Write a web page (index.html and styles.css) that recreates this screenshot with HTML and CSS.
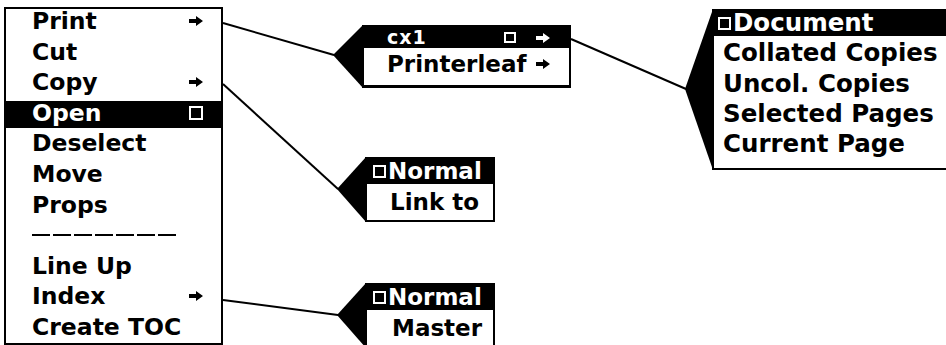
FILE: index.html
```html
<!DOCTYPE html>
<html lang="en">
<head>
  <meta charset="UTF-8" />
  <title>Menu Cascade</title>
  <link rel="stylesheet" href="styles.css">
</head>
<body>
  <div class="canvas">
    <!-- connectors and pointer wedges between the menus -->
    <svg class="wires" width="946" height="345" viewBox="0 0 946 345">
      <g stroke="#000" stroke-width="2" fill="none">
        <line x1="223" y1="23" x2="334" y2="55" />
        <line x1="223" y1="84" x2="338" y2="189" />
        <line x1="223" y1="300" x2="338" y2="315" />
        <line x1="571" y1="39" x2="686" y2="89" />
      </g>
      <g fill="#000">
        <polygon points="333,55 363,25 363,88" />
        <polygon points="337,189 366,157 366,222" />
        <polygon points="337,315 366,283 366,348" />
        <polygon points="685,89 713,9 713,170" />
      </g>
    </svg>

    <div class="menu main">
      <div class="item"><span class="label">Print</span><svg class="arrow" viewBox="0 0 14 10"><path d="M0 3h7V0l7 5-7 5V7H0z"/></svg></div>
      <div class="item"><span class="label">Cut</span></div>
      <div class="item"><span class="label">Copy</span><svg class="arrow" viewBox="0 0 14 10"><path d="M0 3h7V0l7 5-7 5V7H0z"/></svg></div>
      <div class="item on"><span class="label">Open</span><span class="box big"></span></div>
      <div class="item"><span class="label">Deselect</span></div>
      <div class="item"><span class="label">Move</span></div>
      <div class="item"><span class="label">Props</span></div>
      <div class="item"><span class="rule"></span></div>
      <div class="item"><span class="label">Line Up</span></div>
      <div class="item"><span class="label">Index</span><svg class="arrow" viewBox="0 0 14 10"><path d="M0 3h7V0l7 5-7 5V7H0z"/></svg></div>
      <div class="item"><span class="label">Create TOC</span></div>
    </div>

    <div class="menu printers">
      <div class="item on small"><span class="label">cx1</span><span class="box"></span><svg class="arrow gap" viewBox="0 0 14 10"><path d="M0 3h7V0l7 5-7 5V7H0z"/></svg></div>
      <div class="item"><span class="label">Printerleaf</span><svg class="arrow" viewBox="0 0 14 10"><path d="M0 3h7V0l7 5-7 5V7H0z"/></svg></div>
    </div>

    <div class="menu docs">
      <div class="item on short lead"><span class="box"></span><span class="label">Document</span></div>
      <div class="item"><span class="label">Collated Copies</span></div>
      <div class="item"><span class="label">Uncol. Copies</span></div>
      <div class="item"><span class="label">Selected Pages</span></div>
      <div class="item"><span class="label">Current Page</span></div>
    </div>

    <div class="menu mode copy-mode">
      <div class="item on short lead"><span class="box"></span><span class="label">Normal</span></div>
      <div class="item"><span class="label">Link to</span></div>
    </div>

    <div class="menu mode index-mode">
      <div class="item on short lead"><span class="box"></span><span class="label">Normal</span></div>
      <div class="item"><span class="label">Master</span></div>
    </div>
  </div>
</body>
</html>
```

FILE: styles.css
```css
body {
  margin: 0;
  background: #fff;
  color: #000;
  font-family: "DejaVu Sans", "Liberation Sans", sans-serif;
  font-weight: bold;
}

.canvas {
  position: relative;
  width: 946px;
  height: 345px;
  overflow: hidden;
}

.wires {
  position: absolute;
  left: 0;
  top: 0;
}

.menu {
  position: absolute;
  box-sizing: border-box;
  background: #fff;
  border: 2px solid #000;
}

.item {
  display: flex;
  align-items: center;
  box-sizing: border-box;
  height: 27px;
  line-height: 24px;
  padding-bottom: 3px;
  margin-bottom: 3.6px;
  white-space: nowrap;
}

.item:last-child {
  margin-bottom: 0;
}

.item.on {
  background: #000;
  color: #fff;
}

.item.short {
  height: 25px;
  padding-bottom: 1px;
  margin-bottom: 5.6px;
}

.label {
  flex: 1;
}

.lead .label {
  flex: none;
}

.arrow {
  width: 14px;
  height: 10px;
  fill: currentColor;
  flex: none;
}

.box {
  box-sizing: border-box;
  width: 13px;
  height: 13px;
  border: 2px solid currentColor;
  flex: none;
}

.box.big {
  width: 14px;
  height: 14px;
}

.rule {
  width: 144px;
  height: 2px;
  background: repeating-linear-gradient(90deg, #000 0 18px, transparent 18px 21px);
}

/* main menu */
.main {
  left: 4px;
  top: 7px;
  width: 219px;
  height: 338px;
  font-size: 23.5px;
}

.main .item {
  padding-left: 26px;
  padding-right: 18px;
}

/* printer submenu */
.printers {
  left: 362px;
  top: 25px;
  width: 209px;
  height: 63px;
  font-size: 23px;
  border-bottom-width: 3px;
}

.printers .item {
  padding-left: 23px;
  padding-right: 19px;
}

.printers .small {
  height: 21px;
  line-height: 21px;
  padding-bottom: 0;
  font-size: 19px;
  letter-spacing: 1px;
}

.printers .small .box {
  width: 12px;
  height: 11px;
}

.arrow.gap {
  margin-left: 20px;
}

/* document submenu */
.docs {
  left: 712px;
  top: 9px;
  width: 260px;
  height: 161px;
  font-size: 24.5px;
}

.docs .item {
  padding-left: 9px;
  margin-bottom: 3.3px;
}

.docs .item.short {
  margin-bottom: 5.3px;
}

.docs .lead {
  padding-left: 4px;
}

.lead .box {
  margin-right: 2px;
}

/* normal / link to, normal / master */
.mode {
  left: 365px;
  width: 130px;
  height: 65px;
  font-size: 23px;
}

.copy-mode {
  top: 157px;
}

.index-mode {
  top: 283px;
}

.mode .item {
  padding-left: 23px;
}

.index-mode .item {
  padding-left: 25px;
}

.mode .lead {
  padding-left: 6px;
}
```
